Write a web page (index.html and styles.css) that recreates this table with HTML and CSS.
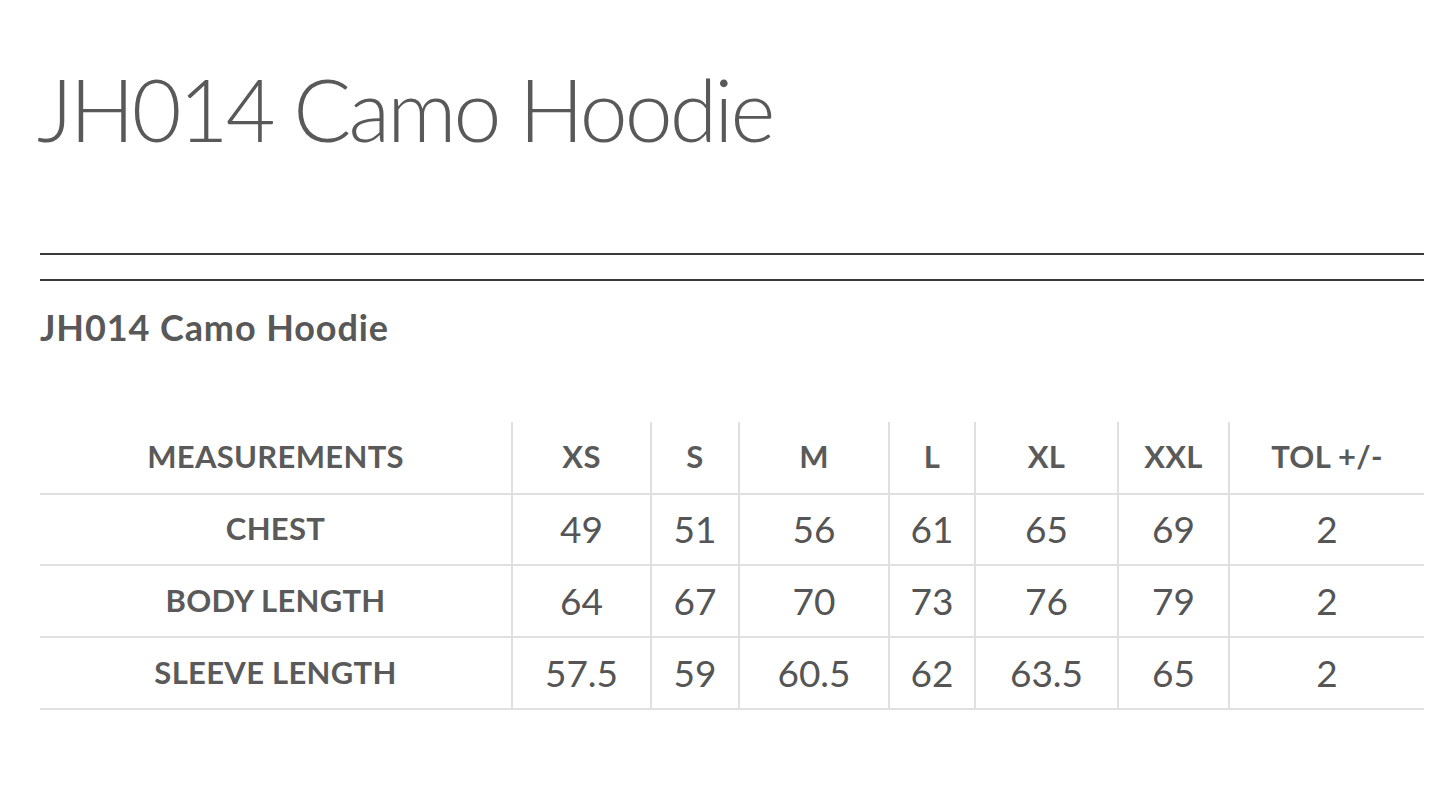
FILE: index.html
```html
<!DOCTYPE html>
<html>
<head>
<meta charset="utf-8">
<title>JH014 Camo Hoodie</title>
<link rel="stylesheet" href="styles.css">
</head>
<body>
<div class="page">
  <h1 class="title">JH014 Camo Hoodie</h1>
  <div class="rules">
    <div class="rule"></div>
    <div class="rule"></div>
  </div>
  <h2 class="subtitle">JH014 Camo Hoodie</h2>
  <table class="sizes">
    <colgroup>
      <col class="c-meas">
      <col class="c-xs">
      <col class="c-s">
      <col class="c-m">
      <col class="c-l">
      <col class="c-xl">
      <col class="c-xxl">
      <col class="c-tol">
    </colgroup>
    <thead>
      <tr>
        <th>MEASUREMENTS</th>
        <th>XS</th>
        <th>S</th>
        <th>M</th>
        <th>L</th>
        <th>XL</th>
        <th>XXL</th>
        <th>TOL +/-</th>
      </tr>
    </thead>
    <tbody>
      <tr>
        <th>CHEST</th>
        <td>49</td><td>51</td><td>56</td><td>61</td><td>65</td><td>69</td><td>2</td>
      </tr>
      <tr>
        <th>BODY LENGTH</th>
        <td>64</td><td>67</td><td>70</td><td>73</td><td>76</td><td>79</td><td>2</td>
      </tr>
      <tr>
        <th>SLEEVE LENGTH</th>
        <td>57.5</td><td>59</td><td>60.5</td><td>62</td><td>63.5</td><td>65</td><td>2</td>
      </tr>
    </tbody>
  </table>
</div>
</body>
</html>
```

FILE: styles.css
```css
html, body {
  margin: 0;
  padding: 0;
  background: #ffffff;
}

.page {
  padding: 66px 21px 0 40px;
  font-family: "Lato", "Open Sans", sans-serif;
  color: #5a5a5a;
}

.title {
  margin: 0 0 0 -3px;
  font-size: 86px;
  font-weight: 300;
  letter-spacing: -2.9px;
  line-height: 1;
  color: #595959;
}

.rules {
  margin-top: 101px;
  display: flex;
  flex-direction: column;
  gap: 24px;
}

.rule {
  height: 2px;
  background: #3a3a3a;
}

.subtitle {
  margin: 28px 0 0 0;
  font-size: 36px;
  font-weight: 700;
  letter-spacing: 0.9px;
  line-height: 1;
  color: #585858;
}

.sizes {
  margin-top: 77px;
  width: 100%;
  border-collapse: collapse;
  table-layout: fixed;
}

.c-meas { width: 472px; }
.c-xs { width: 139px; }
.c-s { width: 88px; }
.c-m { width: 150px; }
.c-l { width: 86px; }
.c-xl { width: 143px; }
.c-xxl { width: 111px; }
.c-tol { width: auto; }

.sizes th,
.sizes td {
  text-align: center;
  vertical-align: middle;
  padding: 0;
  border-bottom: 2px solid #e0e0e0;
  border-left: 2px solid #e0e0e0;
}

.sizes tr > :first-child {
  border-left: none;
}

.sizes thead th {
  height: 68px;
  padding-bottom: 3px;
  font-size: 31px;
  font-weight: 700;
  letter-spacing: 0.3px;
  color: #5a5a5a;
}

.sizes tbody tr {
  height: 72px;
}

.sizes tbody tr:first-child {
  height: 71px;
}

.sizes tbody th {
  padding-bottom: 3px;
  font-size: 31px;
  font-weight: 700;
  letter-spacing: 0.3px;
  color: #5a5a5a;
}

.sizes tbody td {
  padding-bottom: 2px;
  font-size: 37px;
  font-weight: 400;
  color: #555555;
}
```
